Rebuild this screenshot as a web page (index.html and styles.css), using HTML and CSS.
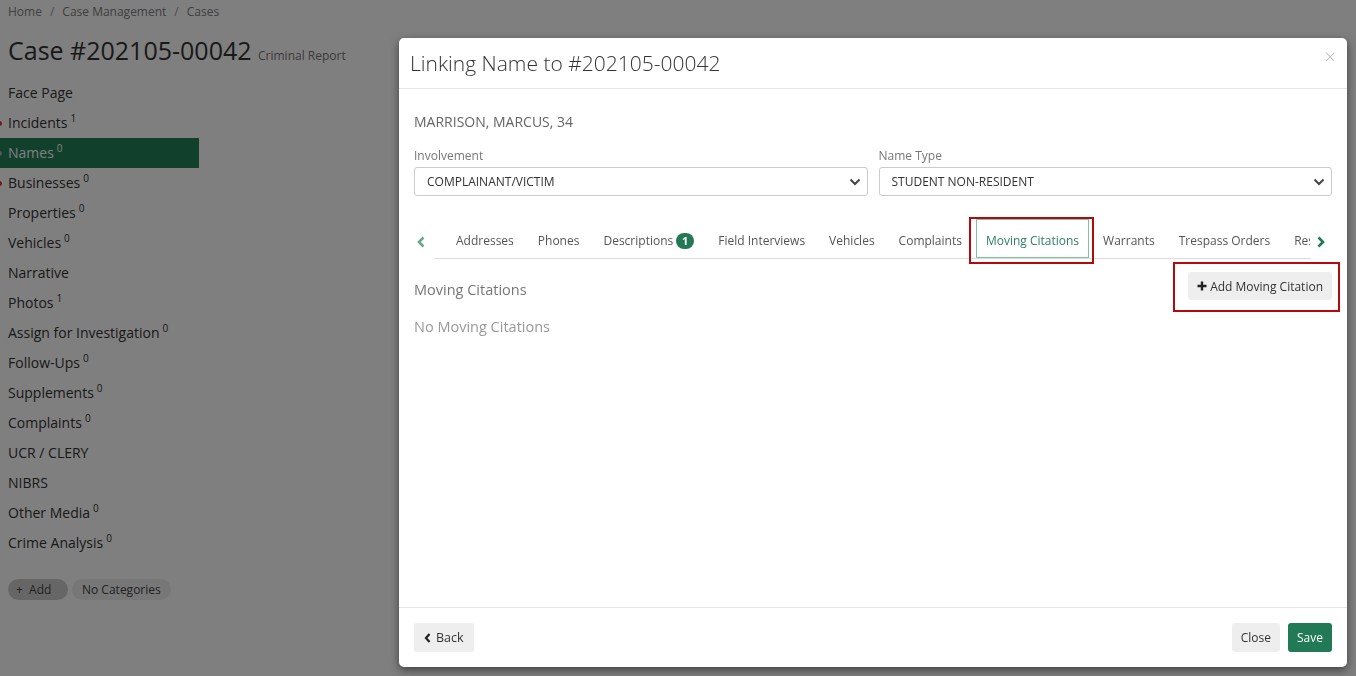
FILE: index.html
```html
<!DOCTYPE html>
<html>
<head>
<meta charset="utf-8">
<link rel="stylesheet" href="styles.css">
</head>
<body>
<div class="page">
  <div class="crumbs"><span>Home</span><span class="sep">/</span><span>Case Management</span><span class="sep">/</span><span>Cases</span></div>
  <h1 class="title">Case #202105-00042 <small>Criminal Report</small></h1>
  <ul class="nav">
    <li>Face Page</li>
    <li class="dot">Incidents<sup>1</sup></li>
    <li class="dot active">Names<sup>0</sup></li>
    <li class="dot">Businesses<sup>0</sup></li>
    <li>Properties<sup>0</sup></li>
    <li>Vehicles<sup>0</sup></li>
    <li>Narrative</li>
    <li>Photos<sup>1</sup></li>
    <li>Assign for Investigation<sup>0</sup></li>
    <li>Follow-Ups<sup>0</sup></li>
    <li>Supplements<sup>0</sup></li>
    <li>Complaints<sup>0</sup></li>
    <li>UCR / CLERY</li>
    <li>NIBRS</li>
    <li>Other Media<sup>0</sup></li>
    <li>Crime Analysis<sup>0</sup></li>
  </ul>
  <div class="pills"><span class="pill dark">+&nbsp; Add</span><span class="pill">No Categories</span></div>
</div>
<div class="overlay"></div>
<div class="modal">
  <div class="mhead">
    <div class="mtitle">Linking Name to #202105-00042</div>
    <div class="x">×</div>
  </div>
  <div class="mbody">
    <div class="person">MARRISON, MARCUS, 34</div>
    <div class="fields">
      <div class="field">
        <label>Involvement</label>
        <div class="select"><span>COMPLAINANT/VICTIM</span><svg width="12" height="8" viewBox="0 0 12 8"><path d="M1.5 1.5 L6 6 L10.5 1.5" fill="none" stroke="#444" stroke-width="2"/></svg></div>
      </div>
      <div class="field">
        <label>Name Type</label>
        <div class="select"><span>STUDENT NON-RESIDENT</span><svg width="12" height="8" viewBox="0 0 12 8"><path d="M1.5 1.5 L6 6 L10.5 1.5" fill="none" stroke="#444" stroke-width="2"/></svg></div>
      </div>
    </div>
    <div class="tabsrow">
      <svg class="arrow" width="10" height="12" viewBox="0 0 10 12"><path d="M7.5 1.5 L3 6 L7.5 10.5" fill="none" stroke="#6aa88c" stroke-width="2.6"/></svg>
      <div class="tabs">
        <div class="tab">Addresses</div>
        <div class="tab">Phones</div>
        <div class="tab">Descriptions<span class="badge">1</span></div>
        <div class="tab">Field Interviews</div>
        <div class="tab">Vehicles</div>
        <div class="tab">Complaints</div>
        <div class="tab active">Moving Citations</div>
        <div class="tab">Warrants</div>
        <div class="tab">Trespass Orders</div>
        <div class="tab cut"><span>Restrictions</span></div>
      </div>
      <svg class="arrow right" width="10" height="12" viewBox="0 0 10 12"><path d="M2.5 1.5 L7 6 L2.5 10.5" fill="none" stroke="#217a55" stroke-width="2.6"/></svg>
    </div>
    <div class="section">
      <div class="shead">
        <div class="stitle">Moving Citations</div>
        <div class="addwrap"><button class="btn"><svg width="10" height="10" viewBox="0 0 10 10"><path d="M5 0.5 V9.5 M0.5 5 H9.5" stroke="#222" stroke-width="2.4"/></svg> Add Moving Citation</button></div>
      </div>
      <div class="empty">No Moving Citations</div>
    </div>
  </div>
  <div class="mfoot">
    <button class="btn foot back"><svg width="7" height="10" viewBox="0 0 7 10"><path d="M5.5 1 L2 5 L5.5 9" fill="none" stroke="#222" stroke-width="2.2"/></svg> Back</button>
    <div class="right">
      <button class="btn foot">Close</button>
      <button class="btn foot green">Save</button>
    </div>
  </div>
</div>
</body>
</html>
```
FILE: styles.css
```css
* { box-sizing: border-box; }
body { margin: 0; font-family: "Open Sans", "Liberation Sans", sans-serif; color: #333; background: #fff; width: 1356px; height: 676px; overflow: hidden; }
.page { padding: 0 0 0 8px; }
.crumbs { font-size: 12px; color: #808080; height: 24px; line-height: 24px; }
.crumbs .sep { margin: 0 8px; color: #999; }
.title { font-size: 25px; font-weight: 400; margin: 9px 0 0; line-height: 34px; color: #333; }
.title small { font-size: 12px; color: #777; }
.nav { list-style: none; margin: 5px 0 0 -8px; padding: 0; width: 199px; }
.nav li { height: 30px; line-height: 30px; font-size: 14px; padding-left: 8px; position: relative; }
.nav li sup { font-size: 10px; margin-left: 3px; vertical-align: 6px; line-height: 0; }
.nav li.active { background: #22805a; color: #fff; }
.nav li.dot::before { content: ""; position: absolute; left: -3px; top: 13px; width: 5px; height: 5px; border-radius: 50%; background: #d33; }
.nav li.active.dot::before { background: #aaa; }
.pills { margin-top: 21px; display: flex; gap: 4px; }
.pill { font-size: 12px; height: 21px; line-height: 21px; padding: 0 10px; border-radius: 11px; background: #eee; color: #444; }
.pill.dark { background: #ccc; padding: 0 8px 0 8px; width: 60px; }
.overlay { position: fixed; inset: 0; background: rgba(0,0,0,0.5); }
.modal { position: absolute; left: 399px; top: 38px; width: 948px; height: 629px; background: #fff; border-radius: 5px; box-shadow: 0 3px 9px rgba(0,0,0,0.5); display: flex; flex-direction: column; }
.mhead { height: 51px; border-bottom: 1px solid #e5e5e5; display: flex; align-items: center; justify-content: space-between; padding: 0 10px 0 11px; }
.mtitle { font-size: 21px; font-weight: 300; color: #333; }
.x { font-size: 20px; color: #bbb; font-weight: 300; margin-top: -14px; margin-right: 1px; }
.mbody { flex: 1; padding: 22px 15px 0 15px; }
.person { font-size: 14px; color: #666; line-height: 22px; }
.fields { display: flex; gap: 11px; margin-top: 15px; }
.field { flex: 1; }
.field label { display: block; font-size: 12px; color: #777; line-height: 16px; margin-bottom: 3px; }
.select { height: 29px; border: 1px solid #ccc; border-radius: 3px; display: flex; align-items: center; justify-content: space-between; padding: 0 6px 0 12px; font-size: 12px; color: #333; }
.tabsrow { display: flex; align-items: center; margin-top: 23px; height: 40px; }
.tabsrow .arrow { flex: none; margin: 6px 2px 0 2px; }
.tabsrow .arrow.right { margin-right: 6px; }
.tabs { flex: 1; min-width: 0; display: flex; border-bottom: 1px solid #ddd; height: 40px; padding-left: 10px; margin: 0 3px 0 6px; }
.tab { flex: none; padding: 4px 9px 0; margin: 0 2px; font-size: 12px; color: #555; display: flex; align-items: center; height: 39px; border: 1px solid transparent; white-space: nowrap; position: relative; }
.tab.active { border: 1px solid #7fc4a2; color: #2e7d64; background: #fff; }
.tab.active::after { content: ""; position: absolute; left: -8px; right: -6px; top: -3px; bottom: -7px; border: 2px solid #b30b0b; }
.tab.cut { padding-right: 0; margin-right: 0; flex: 1 1 0; min-width: 0; overflow: hidden; }
.tab.cut span { overflow: hidden; }
.badge { display: inline-block; background: #217a55; color: #fff; font-weight: 700; font-size: 11px; height: 16px; min-width: 18px; line-height: 16px; text-align: center; border-radius: 8px; margin-left: 3px; }
.section { margin-top: 3px; }
.shead { display: flex; justify-content: space-between; align-items: flex-start; }
.stitle { font-size: 14.5px; color: #777; line-height: 20px; margin-top: 18px; }
.addwrap { border: 2px solid #b30b0b; padding: 8px 6px 10px 13px; margin-right: -8px; }
.btn { font-family: "Open Sans", "Liberation Sans", sans-serif; background: #eee; border: 0; border-radius: 3px; height: 28px; padding: 0 9px; font-size: 12px; color: #333; display: inline-flex; align-items: center; gap: 3px; }
.empty { font-size: 14.5px; color: #999; margin-top: 5px; line-height: 20px; }
.mfoot { height: 60px; border-top: 1px solid #e5e5e5; display: flex; justify-content: space-between; align-items: center; padding: 0 15px; }
.mfoot .right { display: flex; gap: 8px; }
.btn.foot { height: 29px; font-size: 12px; padding: 0 9px; gap: 5px; }
.btn.foot.back { padding: 0 10px; font-size: 12.5px; }
.btn.green { background: #217a55; color: #fff; }
```
